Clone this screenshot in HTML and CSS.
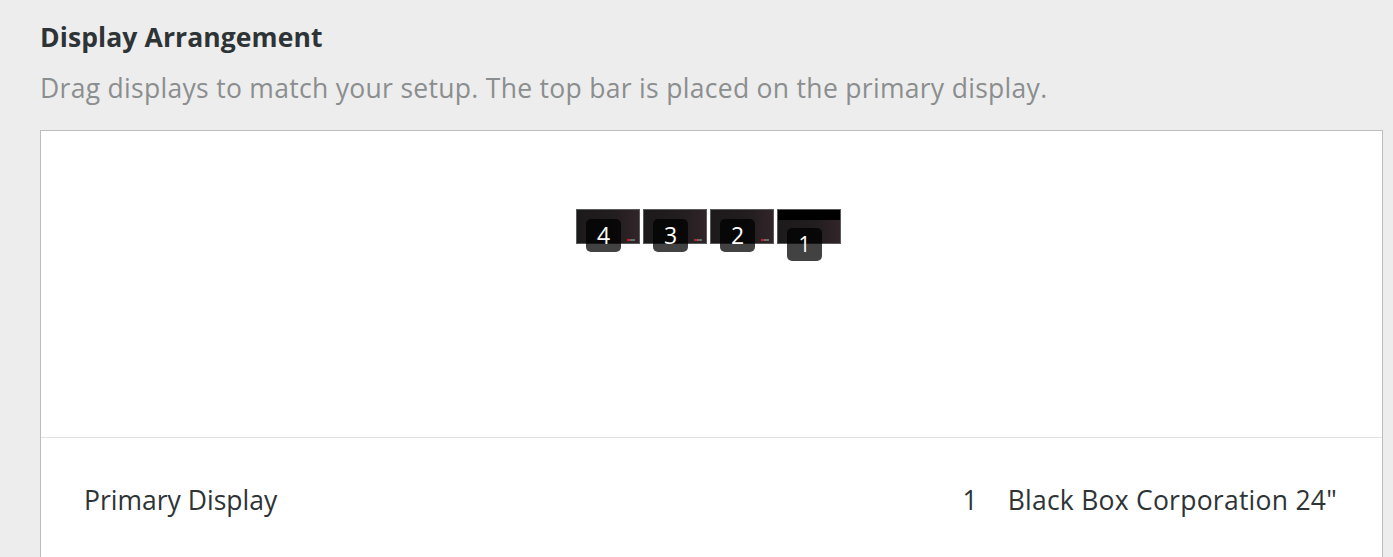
FILE: index.html
```html
<!DOCTYPE html>
<html>
<head>
<meta charset="utf-8">
<link rel="stylesheet" href="styles.css">
</head>
<body>
<div class="page">
  <h1 class="title">Display Arrangement</h1>
  <p class="subtitle">Drag displays to match your setup. The top bar is placed on the primary display.</p>
  <div class="frame">
    <div class="arrangement">
      <div class="monitors">
        <div class="monitor"><span class="dot"></span><span class="label">4</span></div>
        <div class="monitor"><span class="dot"></span><span class="label">3</span></div>
        <div class="monitor"><span class="dot"></span><span class="label">2</span></div>
        <div class="monitor primary"><span class="topbar"></span><span class="label">1</span></div>
      </div>
    </div>
    <div class="row">
      <span class="row-title">Primary Display</span>
      <span class="row-value"><span class="num">1</span><span class="name">Black Box Corporation 24"</span></span>
    </div>
  </div>
</div>
</body>
</html>
```

FILE: styles.css
```css
html, body {
  margin: 0;
  padding: 0;
  background: #ededed;
  overflow: hidden;
}
body {
  font-family: "Open Sans", "Noto Sans", sans-serif;
  color: #2e3436;
}
.page {
  padding: 20px 10px 0 40px;
}
.title {
  margin: 0;
  font-size: 26.5px;
  font-weight: 700;
  line-height: 34px;
  letter-spacing: 0.1px;
  color: #2e3436;
}
.subtitle {
  margin: 17px 0 0 0;
  font-size: 26.5px;
  line-height: 34px;
  letter-spacing: 0.3px;
  color: #8b8e8f;
}
.frame {
  margin-top: 25px;
  background: #fff;
  border: 1px solid #bdbdbd;
  height: 500px;
}
.arrangement {
  height: 307px;
  border-bottom: 1px solid #e2e2e2;
  display: flex;
  justify-content: center;
  padding-top: 78px;
  box-sizing: border-box;
  padding-right: 6px;
}
.monitors {
  display: flex;
  gap: 3px;
  align-items: flex-start;
}
.monitor {
  position: relative;
  width: 64px;
  height: 35px;
  box-sizing: border-box;
  border: 1px solid #5a5a5a;
  background: linear-gradient(90deg, #1d1a1b 0%, #221d1f 60%, #31252a 100%);
}
.topbar {
  display: block;
  height: 10px;
  background: #000;
}
.dot {
  position: absolute;
  right: 4px;
  bottom: 2px;
  width: 8px;
  height: 2px;
  background: linear-gradient(90deg, #c0202a 0 3px, #6a6a6a 3px 100%);
}
.label {
  position: absolute;
  left: 9px;
  top: 9px;
  width: 35px;
  height: 33px;
  border-radius: 5px;
  background: rgba(0, 0, 0, 0.74);
  color: #fff;
  font-size: 23px;
  line-height: 33px;
  text-align: center;
}
.primary .label {
  top: 18px;
  font-size: 21px;
}
.row {
  display: flex;
  justify-content: space-between;
  align-items: center;
  padding: 45px 45px 0 43px;
  font-size: 26.5px;
  line-height: 34px;
  color: #2e3436;
}
.row-value {
  display: flex;
  gap: 30px;
}
.name {
  letter-spacing: 0.25px;
}
```
